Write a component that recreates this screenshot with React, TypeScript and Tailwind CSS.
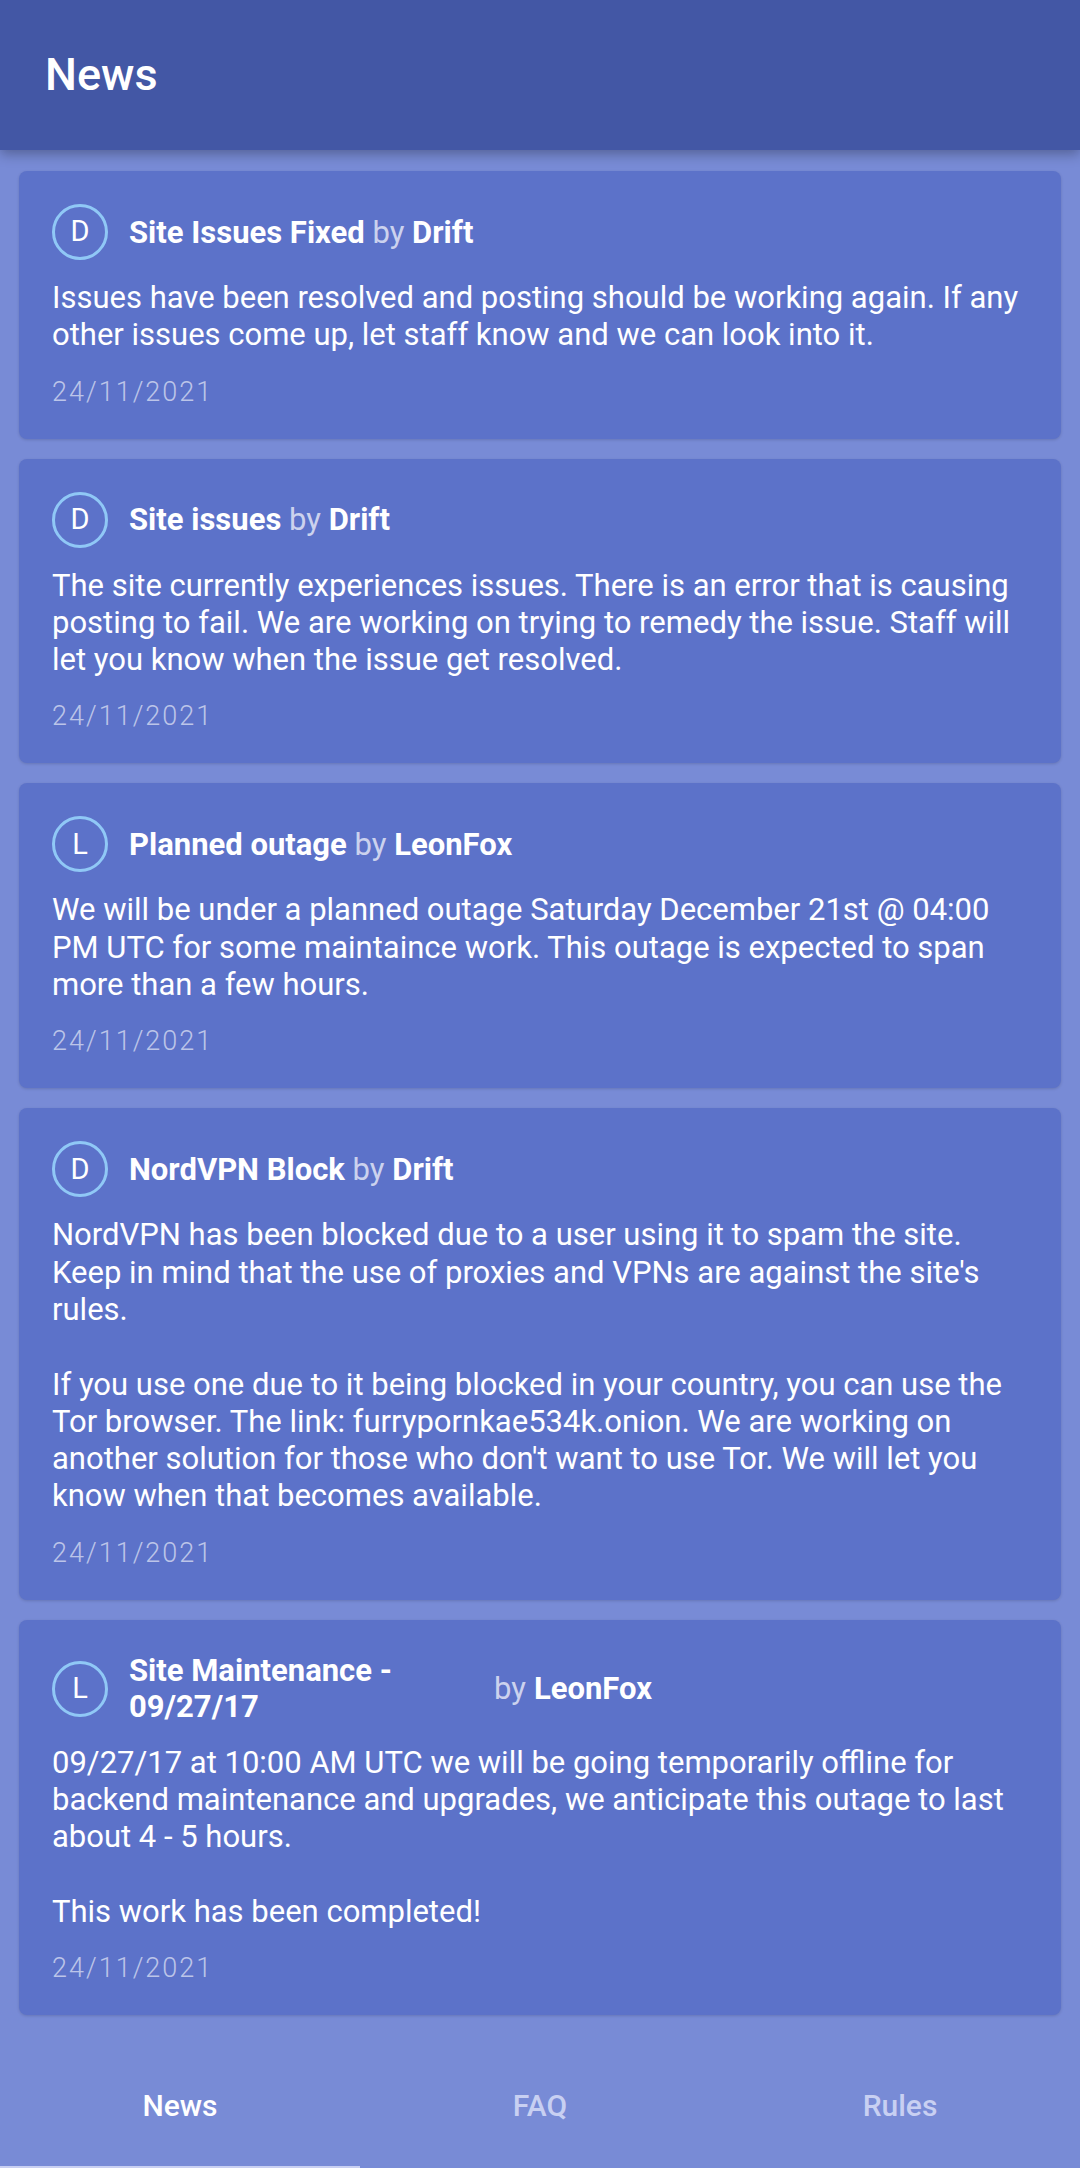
interface Post {
  letter: string;
  title: string;
  author: string;
  body: string;
  date: string;
  wrapTitle?: boolean;
}

const posts: Post[] = [
  {
    letter: 'D',
    title: 'Site Issues Fixed',
    author: 'Drift',
    body: 'Issues have been resolved and posting should be working again. If any other issues come up, let staff know and we can look into it.',
    date: '24/11/2021',
  },
  {
    letter: 'D',
    title: 'Site issues',
    author: 'Drift',
    body: 'The site currently experiences issues. There is an error that is causing posting to fail. We are working on trying to remedy the issue. Staff will let you know when the issue get resolved.',
    date: '24/11/2021',
  },
  {
    letter: 'L',
    title: 'Planned outage',
    author: 'LeonFox',
    body: 'We will be under a planned outage Saturday December 21st @ 04:00 PM UTC for some maintaince work. This outage is expected to span more than a few hours.',
    date: '24/11/2021',
  },
  {
    letter: 'D',
    title: 'NordVPN Block',
    author: 'Drift',
    body: "NordVPN has been blocked due to a user using it to spam the site. Keep in mind that the use of proxies and VPNs are against the site's rules.\n\nIf you use one due to it being blocked in your country, you can use the Tor browser. The link: furrypornkae534k.onion. We are working on another solution for those who don't want to use Tor. We will let you know when that becomes available.",
    date: '24/11/2021',
  },
  {
    letter: 'L',
    title: 'Site Maintenance - 09/27/17',
    author: 'LeonFox',
    body: '09/27/17 at 10:00 AM UTC we will be going temporarily offline for backend maintenance and upgrades, we anticipate this outage to last about 4 - 5 hours.\n\nThis work has been completed!',
    date: '24/11/2021',
    wrapTitle: true,
  },
];

const Avatar = ({ letter }: { letter: string }) => (
  <div className="w-[56px] h-[56px] shrink-0 rounded-full border-[3px] border-[#90C8F6] flex items-center justify-center text-[29px] text-white">
    {letter}
  </div>
);

const NewsCard = ({ post }: { post: Post }) => (
  <div className="rounded-[8px] bg-[#5C72C9] px-[33px] pt-[33px] pb-[29px] shadow-[0_1px_3px_rgba(0,0,0,0.15)]">
    <div className="flex items-center gap-[21px]">
      <Avatar letter={post.letter} />
      {post.wrapTitle ? (
        <div className="flex items-center text-[31px] text-white">
          <span className="w-[355px] font-bold leading-[36px]">{post.title}</span>
          <span className="ml-[10px] text-white/70">by</span>
          <span className="ml-[8px] font-bold">{post.author}</span>
        </div>
      ) : (
        <p className="text-[31px] text-white leading-[37px]">
          <span className="font-bold">{post.title}</span>{' '}
          <span className="text-white/70">by</span>{' '}
          <span className="font-bold">{post.author}</span>
        </p>
      )}
    </div>
    <p className="mt-[19px] text-[31px] leading-[37.3px] text-white whitespace-pre-line">{post.body}</p>
    <p className="mt-[20px] text-[27px] font-light leading-[36px] tracking-[2px] text-white/60">{post.date}</p>
  </div>
);

const tabs = ['News', 'FAQ', 'Rules'];

export default function App() {
  return (
    <div
      className="h-[2168px] w-full flex flex-col bg-[#788BD6] overflow-hidden"
      style={{ fontFamily: 'Roboto, "Noto Sans", sans-serif' }}
    >
      <header className="relative z-10 h-[150px] shrink-0 bg-[#4357A5] px-[45px] flex items-center shadow-[0_4px_12px_rgba(0,0,0,0.3)]">
        <h1 className="text-[45px] font-medium text-white">News</h1>
      </header>

      <main className="flex-1 px-[19px] pt-[21px] flex flex-col gap-[20px]">
        {posts.map((post) => (
          <NewsCard key={post.title} post={post} />
        ))}
      </main>

      <nav className="h-[126px] shrink-0 grid grid-cols-3">
        {tabs.map((tab, i) => (
          <div
            key={tab}
            className={
              i === 0
                ? 'flex items-center justify-center border-b-[2px] border-[#C9D0F2] pt-[2px] text-[30px] font-medium text-white'
                : 'flex items-center justify-center border-b-[2px] border-transparent pt-[2px] text-[30px] font-medium text-[#C8D0F2]'
            }
          >
            {tab}
          </div>
        ))}
      </nav>
    </div>
  );
}
